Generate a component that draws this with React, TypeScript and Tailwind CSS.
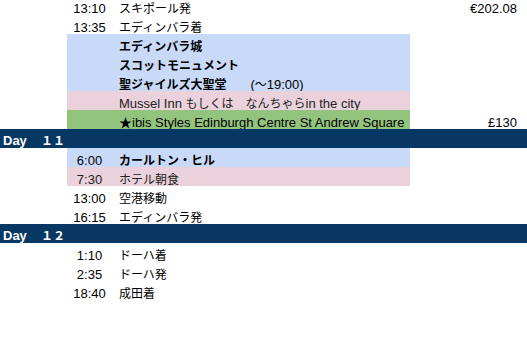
import React from "react";

const CJK = /([\u3000-\u30ff\u4e00-\u9fff\uff00-\uffef]+)/;

function T({ s }: { s: string }) {
  const parts = s.split(CJK).filter((p) => p.length > 0);
  return (
    <>
      {parts.map((p, i) =>
        CJK.test(p) ? (
          <span key={i} className="text-[12px]">
            {p}
          </span>
        ) : (
          <span key={i}>{p}</span>
        )
      )}
    </>
  );
}

type Row =
  | { kind: "day"; label: string }
  | { kind: "item"; time?: string; text: React.ReactNode; bg?: string; price?: string; bold?: boolean; color?: string };

const rows: Row[] = [
  { kind: "item", time: "13:10", text: <T s="スキポール発" />, price: "€202.08" },
  { kind: "item", time: "13:35", text: <T s="エディンバラ着" /> },
  { kind: "item", text: <T s="エディンバラ城" />, bg: "bg-[#c9daf8]", bold: true },
  { kind: "item", text: <T s="スコットモニュメント" />, bg: "bg-[#c9daf8]", bold: true },
  {
    kind: "item",
    text: (
      <>
        <span className="font-bold">
          <T s="聖ジャイルズ大聖堂" />
        </span>
        <span className="ml-[24px]">
          (<T s="～" />
          19:00)
        </span>
      </>
    ),
    bg: "bg-[#c9daf8]",
  },
  { kind: "item", text: <T s="Mussel Inn もしくは　なんちゃらin the city" />, bg: "bg-[#ead1dc]", color: "text-[#222222]" },
  { kind: "item", text: <T s="★ibis Styles Edinburgh Centre St Andrew Square" />, bg: "bg-[#93c47d]", price: "£130" },
  { kind: "day", label: "１１" },
  { kind: "item", time: "6:00", text: <T s="カールトン・ヒル" />, bg: "bg-[#c9daf8]", bold: true },
  { kind: "item", time: "7:30", text: <T s="ホテル朝食" />, bg: "bg-[#ead1dc]", color: "text-[#222222]" },
  { kind: "item", time: "13:00", text: <T s="空港移動" /> },
  { kind: "item", time: "16:15", text: <T s="エディンバラ発" /> },
  { kind: "day", label: "１２" },
  { kind: "item", time: "1:10", text: <T s="ドーハ着" /> },
  { kind: "item", time: "2:35", text: <T s="ドーハ発" /> },
  { kind: "item", time: "18:40", text: <T s="成田着" /> },
];

export default function App() {
  return (
    <div
      className="w-[527px] h-[363px] overflow-hidden bg-white text-[13px] text-black"
      style={{ fontFamily: '"Liberation Sans", "Noto Sans CJK JP", sans-serif' }}
    >
      <div className="-mt-[4px] flex flex-col">
        {rows.map((r, i) =>
          r.kind === "day" ? (
            <div key={i} className="flex h-[19px] items-center pt-[4px] bg-[#073763] text-white font-bold leading-none">
              <span className="w-[41px] pl-[3px]">Day</span>
              <span className="text-[12px]">{r.label}</span>
            </div>
          ) : (
            <div key={i} className="flex h-[19px] items-stretch leading-none">
              <div className="w-[67px]" />
              <div className={`flex w-[343px] items-center pt-[5px] ${r.bg ?? ""} ${r.color ?? ""}`}>
                <div className="w-[45px] text-center">{r.time ?? ""}</div>
                <div className={`pl-[7px] whitespace-nowrap ${r.bold ? "font-bold" : ""}`}>{r.text}</div>
              </div>
              <div className="flex w-[107px] items-center justify-end pt-[5px]">{r.price ?? ""}</div>
            </div>
          )
        )}
      </div>
    </div>
  );
}
